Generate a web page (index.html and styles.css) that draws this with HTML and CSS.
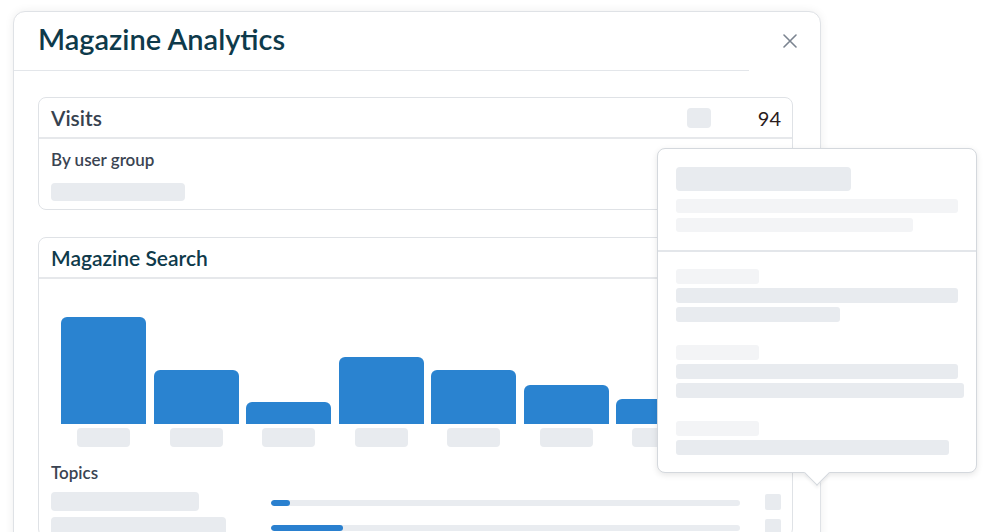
FILE: index.html
```html
<!DOCTYPE html>
<html lang="en">
<head>
<meta charset="utf-8">
<title>Magazine Analytics</title>
<link rel="stylesheet" href="styles.css">
</head>
<body>
<div class="page">
  <div class="modal">
    <div class="modal-header">
      <div class="title-wrap"><h1 class="title">Magazine Analytics</h1></div>
      <div class="close-cell">
        <svg class="close" width="14" height="14" viewBox="0 0 14 14"><path d="M1 1L13 13M13 1L1 13" stroke="#7b8490" stroke-width="1.6" stroke-linecap="round"/></svg>
      </div>
    </div>
    <div class="modal-body">
      <section class="card">
        <div class="card-head">
          <h2 class="card-title slate">Visits</h2>
          <div class="head-right">
            <span class="sk-square"></span>
            <span class="count">94</span>
          </div>
        </div>
        <div class="card-body visits-body">
          <h3 class="sub">By user group</h3>
          <div class="sk sk-group"></div>
        </div>
      </section>

      <section class="card search-card">
        <div class="card-head">
          <h2 class="card-title teal">Magazine Search</h2>
        </div>
        <div class="card-body">
          <div class="chart">
            <div class="col"><div class="bar" style="height:107px"></div><div class="sk label"></div></div>
            <div class="col"><div class="bar" style="height:54px"></div><div class="sk label"></div></div>
            <div class="col"><div class="bar" style="height:22px"></div><div class="sk label"></div></div>
            <div class="col"><div class="bar" style="height:67px"></div><div class="sk label"></div></div>
            <div class="col"><div class="bar" style="height:54px"></div><div class="sk label"></div></div>
            <div class="col"><div class="bar" style="height:39px"></div><div class="sk label"></div></div>
            <div class="col"><div class="bar" style="height:25px"></div><div class="sk label"></div></div>
          </div>
          <h3 class="sub topics-title">Topics</h3>
          <div class="topics">
            <div class="topic">
              <div class="sk topic-name" style="width:148px"></div>
              <div class="track"><div class="fill" style="width:19px"></div></div>
              <div class="sk topic-count"></div>
            </div>
            <div class="topic">
              <div class="sk topic-name" style="width:175px"></div>
              <div class="track"><div class="fill" style="width:72px"></div></div>
              <div class="sk topic-count"></div>
            </div>
          </div>
        </div>
      </section>
    </div>
  </div>

  <div class="popover">
    <div class="pop-top">
      <div class="sk pop-head"></div>
      <div class="sk-light pop-line" style="width:282px"></div>
      <div class="sk-light pop-line" style="width:237px"></div>
    </div>
    <div class="pop-bottom">
      <div class="pop-group">
        <div class="sk-light pop-label"></div>
        <div class="sk pop-line" style="width:282px"></div>
        <div class="sk pop-line" style="width:164px"></div>
      </div>
      <div class="pop-group">
        <div class="sk-light pop-label"></div>
        <div class="sk pop-line" style="width:282px"></div>
        <div class="sk pop-line" style="width:288px"></div>
      </div>
      <div class="pop-group">
        <div class="sk-light pop-label"></div>
        <div class="sk pop-line" style="width:273px"></div>
      </div>
    </div>
    <div class="pop-arrow"></div>
  </div>
</div>
</body>
</html>
```

FILE: styles.css
```css
* { box-sizing: border-box; }
html, body { margin: 0; padding: 0; background: #ffffff; }
body {
  font-family: "Lato", "Liberation Sans", sans-serif;
  width: 986px;
  height: 532px;
  overflow: hidden;
}
h1, h2, h3 { margin: 0; }

.page {
  position: relative;
  padding: 11px 0 0 13px;
  height: 532px;
}

.modal {
  width: 808px;
  height: 560px;
  background: #fff;
  border: 1px solid #dfe2e6;
  border-radius: 12px;
  box-shadow: 0 0 10px rgba(0, 0, 0, 0.07);
  overflow: hidden;
}

.modal-header {
  display: flex;
  height: 59px;
}
.title-wrap {
  flex: 1;
  border-bottom: 1px solid #e3e6ea;
  padding: 11px 0 0 24px;
}
.title {
  font-size: 29px;
  font-weight: 600;
  color: #0e3a4b;
  line-height: 32px;
  letter-spacing: 0;
}
.close-cell {
  width: 71px;
  padding: 22px 0 0 34px;
}
.close { display: block; }

.modal-body {
  padding: 26px 27px 0 24px;
  display: flex;
  flex-direction: column;
  gap: 27px;
}

.card {
  border: 1px solid #dfe2e6;
  border-radius: 8px;
  background: #fff;
}
.card-head {
  height: 41px;
  border-bottom: 2px solid #e6e8eb;
  display: flex;
  align-items: center;
  justify-content: space-between;
  padding: 0 11px 0 12px;
}
.card-title {
  font-size: 21px;
  font-weight: 600;
  line-height: 24px;
}
.card-title.slate { color: #37424f; }
.card-title.teal { color: #0e3a4b; }
.head-right {
  display: flex;
  align-items: center;
  gap: 47px;
}
.sk-square {
  width: 24px;
  height: 20px;
  border-radius: 4px;
  background: #e8ebef;
}
.count {
  font-size: 20px;
  color: #2a1c1c;
  line-height: 24px;
}

.card-body { padding: 0 11px 0 12px; }
.visits-body { padding-top: 10px; padding-bottom: 8px; }
.sub {
  font-size: 17px;
  font-weight: 600;
  color: #3a4452;
  line-height: 22px;
}
.sk { background: #e8ebef; border-radius: 4px; }
.sk-light { background: #f3f4f6; border-radius: 4px; }
.sk-group { width: 134px; height: 18px; margin-top: 12px; }

.chart {
  display: flex;
  align-items: flex-end;
  gap: 7.5px;
  margin: 0 0 0 10px;
  height: 168px;
}
.col {
  display: flex;
  flex-direction: column;
  align-items: center;
  width: 85px;
}
.bar {
  width: 85px;
  background: #2a83d0;
  border-radius: 6px 6px 0 0;
}
.label {
  width: 53px;
  height: 19px;
  margin-top: 4px;
}
.topics-title { margin-top: 15px; }

.topics {
  margin-top: 8px;
  display: flex;
  flex-direction: column;
  gap: 6px;
}
.topic {
  display: grid;
  grid-template-columns: 195px 469px 16px;
  column-gap: 25px;
  align-items: center;
}
.topic-name { height: 19px; }
.track {
  height: 6px;
  border-radius: 3px;
  background: #e9ecf0;
  overflow: hidden;
  margin-top: 2px;
}
.fill {
  height: 6px;
  background: #2a80cf;
  border-radius: 3px;
}
.topic-count {
  width: 16px;
  height: 16px;
  border-radius: 2px;
}

.popover {
  position: absolute;
  left: 657px;
  top: 148px;
  width: 320px;
  background: #fff;
  border: 1px solid #d4d8dd;
  border-radius: 8px;
  box-shadow: 0 2px 6px rgba(0, 0, 0, 0.10);
}
.pop-top {
  padding: 18px 18px 18px 18px;
  border-bottom: 2px solid #e3e6ea;
  display: flex;
  flex-direction: column;
  gap: 5px;
}
.pop-head { width: 175px; height: 24px; margin-bottom: 3px; }
.pop-line { height: 14px; border-radius: 3px; }
.pop-bottom {
  padding: 17px 18px 17px 18px;
  display: flex;
  flex-direction: column;
  gap: 23px;
}
.pop-group {
  display: flex;
  flex-direction: column;
  gap: 4px;
}
.pop-group .pop-line { height: 15px; }
.pop-label { width: 83px; height: 15px; border-radius: 3px; }
.pop-arrow {
  position: absolute;
  left: 150px;
  bottom: -10px;
  width: 18px;
  height: 18px;
  background: #fff;
  border-right: 1px solid #d4d8dd;
  border-bottom: 1px solid #d4d8dd;
  transform: rotate(45deg);
  box-shadow: 2px 2px 3px rgba(0, 0, 0, 0.05);
}
```
